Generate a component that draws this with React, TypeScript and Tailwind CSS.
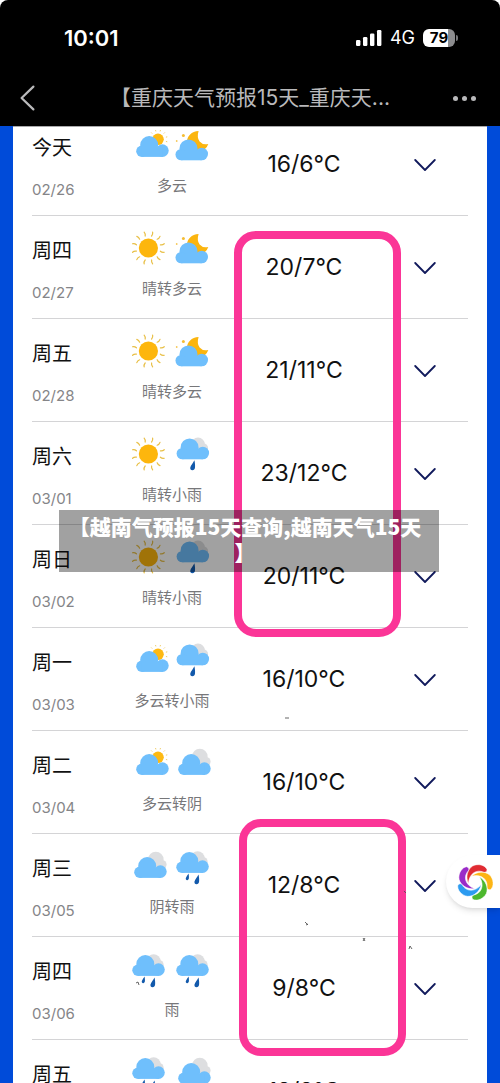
import React from "react";

type Sky = "sun" | "partly" | "moon" | "overcast" | "lightRain" | "rain";

interface Day {
  name: string;
  date: string;
  icons: [Sky, Sky];
  label: string;
  temp: string;
}

const days: Day[] = [
  { name: "今天", date: "02/26", icons: ["partly", "moon"], label: "多云", temp: "16/6°C" },
  { name: "周四", date: "02/27", icons: ["sun", "moon"], label: "晴转多云", temp: "20/7°C" },
  { name: "周五", date: "02/28", icons: ["sun", "moon"], label: "晴转多云", temp: "21/11°C" },
  { name: "周六", date: "03/01", icons: ["sun", "lightRain"], label: "晴转小雨", temp: "23/12°C" },
  { name: "周日", date: "03/02", icons: ["sun", "lightRain"], label: "晴转小雨", temp: "20/11°C" },
  { name: "周一", date: "03/03", icons: ["partly", "lightRain"], label: "多云转小雨", temp: "16/10°C" },
  { name: "周二", date: "03/04", icons: ["partly", "overcast"], label: "多云转阴", temp: "16/10°C" },
  { name: "周三", date: "03/05", icons: ["overcast", "rain"], label: "阴转雨", temp: "12/8°C" },
  { name: "周四", date: "03/06", icons: ["rain", "rain"], label: "雨", temp: "9/8°C" },
  { name: "周五", date: "03/07", icons: ["rain", "overcast"], label: "雨转阴", temp: "12/8°C" },
];

const RAYS = [15, 45, 75, 105, 135, 165, 195, 225, 255, 285, 315, 345];

function Cloud({ x, y }: { x: number; y: number }) {
  return (
    <g transform={`translate(${x} ${y})`} fill="#6fbffc">
      <circle cx="13" cy="9" r="9" />
      <circle cx="5.7" cy="15.2" r="5.7" />
      <circle cx="26.2" cy="14.6" r="6.3" />
      <rect x="5.7" y="11" width="20.5" height="9.9" />
    </g>
  );
}

function Drop({ x, y, s }: { x: number; y: number; s: number }) {
  return (
    <path
      transform={`translate(${x} ${y}) scale(${s})`}
      d="M4.4 0C5 3 5.2 5 5 7.2C4.8 9 3.8 10 2.4 10C.8 10 0 8.8.3 7.2C.8 5 3 3 4.4 0Z"
      fill="#1259ab"
    />
  );
}

function SkyIcon({ kind }: { kind: Sky }) {
  return (
    <svg viewBox="0 0 40 40" className="w-10 h-10" aria-hidden="true">
      {kind === "sun" && (
        <g transform="translate(18.4 20)">
          <circle r="9.6" fill="#fdb60d" />
          {RAYS.map((a) => (
            <path key={a} d="M0-12.4Q1-14.4 0-16.4" transform={`rotate(${a})`} stroke="#e8bf45" strokeWidth="1.2" fill="none" strokeLinecap="round" />
          ))}
        </g>
      )}
      {kind === "partly" && (
        <>
          <g transform="translate(28 14.3)">
            <circle r="5.8" fill="#fdb912" />
            {RAYS.map((a) => (
              <path key={a} d="M0-8.2V-9.6" transform={`rotate(${a})`} stroke="#efcd68" strokeWidth=".9" />
            ))}
          </g>
          <Cloud x={6.2} y={11} />
        </>
      )}
      {kind === "moon" && (
        <>
          <path d="M24.6 6C17.5 6.4 13 11 13 17L20 27L30 25Q33.2 22.6 34.3 19Q28.8 20.3 25.6 16.6Q22.6 12.4 24.6 6Z" fill="#fbb50f" />
          <circle cx="9.4" cy="10.4" r="1.5" fill="#f5bd34" />
          <circle cx="2.7" cy="16" r=".9" fill="#f5c858" />
          <Cloud x={1.5} y={14.4} />
        </>
      )}
      {kind === "overcast" && (
        <>
          <g fill="#dddee0">
            <circle cx="25.8" cy="13.6" r="7.8" />
            <circle cx="32" cy="18.6" r="4.6" />
          </g>
          <Cloud x={4.2} y={11} />
        </>
      )}
      {kind === "lightRain" && (
        <>
          <g fill="#dddee0">
            <circle cx="24" cy="10.6" r="7" />
            <circle cx="29.5" cy="14" r="4.6" />
          </g>
          <Cloud x={2.6} y={4.4} />
          <Drop x={16} y={26.2} s={1} />
        </>
      )}
      {kind === "rain" && (
        <>
          <g fill="#dddee0">
            <circle cx="23.6" cy="12.2" r="7" />
            <circle cx="29" cy="15.6" r="4.6" />
          </g>
          <Cloud x={2.3} y={6} />
          <Drop x={11.6} y={27.6} s={0.66} />
          <Drop x={20.2} y={28.4} s={0.98} />
        </>
      )}
    </svg>
  );
}

function DayRow({ day }: { day: Day }) {
  return (
    <li className="grid grid-cols-[74fr_132fr_132fr_98fr] h-[103px] border-b border-[#d4d4d6]">
      <div className="pt-[21px]">
        <p className="text-xl leading-7 text-[#111]">{day.name}</p>
        <p className="mt-4 text-[15px] leading-6 text-[#858588]">{day.date}</p>
      </div>
      <div className="flex flex-col items-center pt-3">
        <div className="flex gap-1">
          <SkyIcon kind={day.icons[0]} />
          <SkyIcon kind={day.icons[1]} />
        </div>
        <p className="mt-[9px] text-[15px] leading-6 text-[#77777a] whitespace-nowrap">{day.label}</p>
      </div>
      <p className="flex items-center justify-center text-[23px] text-[#111]">{day.temp}</p>
      <button aria-label={`${day.name} ${day.date}`} className="flex items-center justify-center pt-px pl-3 cursor-pointer">
        <svg viewBox="0 0 22 14" className="w-[22px] h-3.5" fill="none" stroke="#111a5c" strokeWidth="1.8" strokeLinecap="round" strokeLinejoin="round">
          <path d="M1.2 2L11 12L20.8 2" />
        </svg>
      </button>
    </li>
  );
}

function StatusBar() {
  return (
    <div className="flex items-center justify-between h-[70px] pt-1.5 pl-16 pr-[42px] text-white">
      <span className="text-[22px] font-semibold">10:01</span>
      <div className="flex items-center gap-2">
        <svg viewBox="0 0 26 16" className="w-[26px] h-4" fill="#fff" aria-hidden="true">
          <rect x="0" y="10" width="4.4" height="6" rx="1.2" />
          <rect x="7" y="7" width="4.4" height="9" rx="1.2" />
          <rect x="14" y="3.6" width="4.4" height="12.4" rx="1.2" />
          <rect x="21" y="0" width="4.4" height="16" rx="1.2" />
        </svg>
        <span className="text-lg">4G</span>
        <div className="flex items-center gap-px">
          <div className="flex items-center justify-center w-8 h-[18px] rounded-md bg-linear-to-r from-white from-79% to-[#8c8c8e] to-79% text-black text-[15px] font-bold">79</div>
          <div className="w-0.5 h-1.5 rounded-r-full bg-[#77777a]" />
        </div>
      </div>
    </div>
  );
}

function NavBar() {
  return (
    <div className="flex items-center h-14 pl-5 pr-6 text-[#b9b9bb]">
      <button aria-label="返回" className="cursor-pointer">
        <svg viewBox="0 0 15 26" className="w-[15px] h-[26px]" fill="none" stroke="currentColor" strokeWidth="2.2" strokeLinecap="round" strokeLinejoin="round">
          <path d="M13.4 1.6L1.6 13L13.4 24.4" />
        </svg>
      </button>
      <h1 className="flex-1 pl-3 text-center text-[21px] whitespace-nowrap">【重庆天气预报15天_重庆天...</h1>
      <button aria-label="更多" className="flex gap-1 cursor-pointer">
        <span className="w-[5px] h-[5px] rounded-full bg-current" />
        <span className="w-[5px] h-[5px] rounded-full bg-current" />
        <span className="w-[5px] h-[5px] rounded-full bg-current" />
      </button>
    </div>
  );
}

const BLADES = [
  { color: "#e02b32", angle: 0 },
  { color: "#fdb515", angle: 72 },
  { color: "#4cb82e", angle: 144 },
  { color: "#2c9bf0", angle: 216 },
  { color: "#9a2bc8", angle: 288 },
];

function FloatingWidget() {
  return (
    <button aria-label="小程序" className="absolute right-0 top-[855px] flex items-center justify-center w-[54px] h-[53px] pl-1 rounded-l-full bg-white shadow-md cursor-pointer">
      <svg viewBox="-18 -18 36 36" className="w-9 h-9">
        {BLADES.map((b) => (
          <path
            key={b.color}
            d="M-6.6 1.6C-9.6-5-7.6-12.6-2.4-16C3-18.8 10-17 12-12.6C12-10.4 10.4-9.2 8.6-9.8C2-13-6-9-6.6 1.6Z"
            transform={`rotate(${b.angle})`}
            fill={b.color}
            stroke="#fff"
            strokeWidth=".5"
          />
        ))}
      </svg>
    </button>
  );
}

// stray ink marks on the sheet
function Specks() {
  return (
    <svg className="absolute inset-0 w-full h-full pointer-events-none" fill="none" stroke="#555" strokeWidth=".9" aria-hidden="true">
      <path d="M285 592h4M305 796l3 3M306 799l2-1M363 812l2 3M365 812l-2 3M409 823l1-3l2 3M404 765l2 2M136 857l2-1l1 3" />
    </svg>
  );
}

export default function App() {
  return (
    <div className="bg-white">
      <div className="relative flex flex-col h-screen overflow-hidden rounded-t-lg bg-black font-[Inter,'Noto_Sans_CJK_SC',sans-serif]">
        <header className="shrink-0">
          <StatusBar />
          <NavBar />
        </header>

        <main className="relative flex-1 overflow-hidden bg-[#004bd9] px-[13px]">
          <div className="h-full border-t border-[#a9a9ab] bg-white px-[19px]">
            {/* list is scrolled a little under the header */}
            <ul className="-mt-3.5">
              {days.map((d) => (
                <DayRow key={d.date} day={d} />
              ))}
            </ul>
          </div>
          <div className="absolute left-[234px] top-[105px] w-[167px] h-[406px] rounded-[22px] border-8 border-[#fb3597] pointer-events-none" />
          <div className="absolute left-[239px] top-[693px] w-[167px] h-[237px] rounded-[22px] border-8 border-[#fb3597] pointer-events-none" />
          <Specks />
        </main>

        <div className="absolute left-[59px] right-[61px] top-[510px] pt-[3px] pb-[7px] pr-2 bg-black/37 text-center font-['Noto_Sans_CJK_SC',sans-serif] text-[21px] leading-[26px] font-black text-white whitespace-nowrap">
          【越南气预报15天查询,越南天气15天
          <br />】
        </div>

        <FloatingWidget />
      </div>
    </div>
  );
}
